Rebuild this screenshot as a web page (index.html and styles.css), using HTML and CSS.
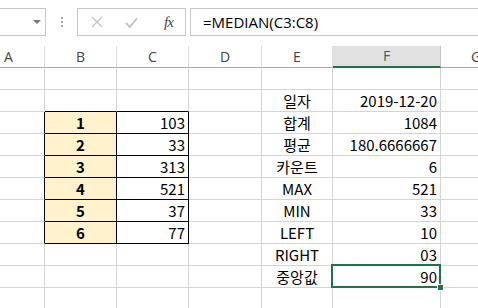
FILE: index.html
```html
<!DOCTYPE html>
<html>
<head>
<meta charset="utf-8">
<title>MEDIAN</title>
<link rel="stylesheet" href="styles.css">
</head>
<body>
<div class="fbar">
  <div class="namebox"><span class="caret"></span></div>
  <div class="dots"><i></i><i></i><i></i></div>
  <div class="btns">
    <svg class="ic-x" width="12" height="12" viewBox="0 0 12 12"><path d="M1 1L11 11M11 1L1 11" stroke="#c4c4c4" stroke-width="1.3" fill="none"/></svg>
    <svg class="ic-ok" width="13" height="11" viewBox="0 0 13 11"><path d="M1 6L5 10L12 1" stroke="#c4c4c4" stroke-width="2" fill="none"/></svg>
    <span class="fx">fx</span>
  </div>
  <div class="formula">=MEDIAN(C3:C8)</div>
</div>

<div class="sheet">
  <div class="hd hd-a">A</div><div class="hd">B</div><div class="hd">C</div><div class="hd">D</div><div class="hd">E</div><div class="hd on">F</div><div class="hd hd-g">G</div>

  <div class="c"></div><div class="c"></div><div class="c"></div><div class="c"></div><div class="c"></div><div class="c"></div><div class="c"></div>

  <div class="c"></div><div class="c bb"></div><div class="c bb"></div><div class="c"></div><div class="c lbl">일자</div><div class="c num">2019-12-20</div><div class="c"></div>

  <div class="c br"></div><div class="c key box">1</div><div class="c num box">103</div><div class="c"></div><div class="c lbl">합계</div><div class="c num">1084</div><div class="c"></div>
  <div class="c br"></div><div class="c key box">2</div><div class="c num box">33</div><div class="c"></div><div class="c lbl">평균</div><div class="c num">180.6666667</div><div class="c"></div>
  <div class="c br"></div><div class="c key box">3</div><div class="c num box">313</div><div class="c"></div><div class="c lbl">카운트</div><div class="c num">6</div><div class="c"></div>
  <div class="c br"></div><div class="c key box">4</div><div class="c num box">521</div><div class="c"></div><div class="c lbl">MAX</div><div class="c num">521</div><div class="c"></div>
  <div class="c br"></div><div class="c key box">5</div><div class="c num box">37</div><div class="c"></div><div class="c lbl">MIN</div><div class="c num">33</div><div class="c"></div>
  <div class="c br"></div><div class="c key box">6</div><div class="c num box">77</div><div class="c"></div><div class="c lbl">LEFT</div><div class="c num">10</div><div class="c"></div>

  <div class="c"></div><div class="c"></div><div class="c"></div><div class="c"></div><div class="c lbl">RIGHT</div><div class="c num">03</div><div class="c"></div>
  <div class="c"></div><div class="c"></div><div class="c"></div><div class="c"></div><div class="c lbl">중앙값</div><div class="c num sel">90</div><div class="c"></div>
  <div class="c"></div><div class="c"></div><div class="c"></div><div class="c"></div><div class="c"></div><div class="c"></div><div class="c"></div>
</div>
</body>
</html>
```

FILE: styles.css
```css
body{ margin:0; background:#fff; overflow:hidden; font-family:"Noto Sans CJK KR","Noto Sans",sans-serif; color:#000;}

/* formula bar */
.fbar{ display:flex; align-items:flex-start; height:46px; padding-top:8px; box-sizing:border-box;}
.namebox{ position:relative; width:56px; height:28px; margin-left:-10px; border:1px solid #c6c6c6; box-sizing:border-box; background:#fff;}
.caret{ position:absolute; left:42px; top:11px; border-left:4px solid transparent; border-right:4px solid transparent; border-top:4px solid #777;}
.dots{ display:flex; flex-direction:column; gap:2px; width:31px; align-items:center; padding-top:9px;}
.dots i{ display:block; width:2px; height:2px; background:#a6a6a6;}
.btns{ display:flex; align-items:center; width:109px; height:28px; border:1px solid #c6c6c6; box-sizing:border-box;}
.ic-x{ margin-left:13px;}
.ic-ok{ margin-left:22px;}
.fx{ margin-left:26px; font:italic 15px "Liberation Serif",serif; color:#444; letter-spacing:-1px;}
.formula{ flex:1; height:28px; margin-left:4px; margin-right:-4px; border:1px solid #c6c6c6; box-sizing:border-box; padding-left:12px; font:15px/26px "Open Sans","Noto Sans",sans-serif; color:#000;}

/* grid */
.sheet{ display:grid; grid-template-columns:45px 72px 72px 73px 71px 108px 1fr; grid-auto-rows:22px;}
.hd{ border-right:1px solid #dcdcdc; border-bottom:1px solid #ababab; text-align:center; font:14px/21px "Open Sans","Noto Sans",sans-serif; color:#444; white-space:nowrap;}
.hd-a{ text-align:left; padding-left:4px;}
.hd-g{ text-align:left; padding-left:30px; border-right:0;}
.hd.on{ background:#e1e1e1; border-bottom:2px solid #217346; color:#217346; line-height:20px; border-right-color:#c6c6c6;}
.c{ border-right:1px solid #d4d4d4; border-bottom:1px solid #d4d4d4; font-size:15px; line-height:21px; white-space:nowrap; overflow:visible;}
.bb{ border-bottom-color:#000;}
.br{ border-right-color:#000;}
.box{ border-right-color:#000; border-bottom-color:#000;}
.key{ background:#fff2cc; text-align:center; font-weight:bold;}
.num{ text-align:right; padding-right:3px;}
.lbl{ text-align:center;}
.sel{ position:relative;}
.sel:after{ content:""; position:absolute; left:-2px; top:-2px; right:-1px; bottom:-1px; border:2px solid #217346;}
.sel:before{ content:""; position:absolute; right:-4px; bottom:-4px; width:5px; height:5px; background:#217346; border:1px solid #fff; z-index:1;}
```
